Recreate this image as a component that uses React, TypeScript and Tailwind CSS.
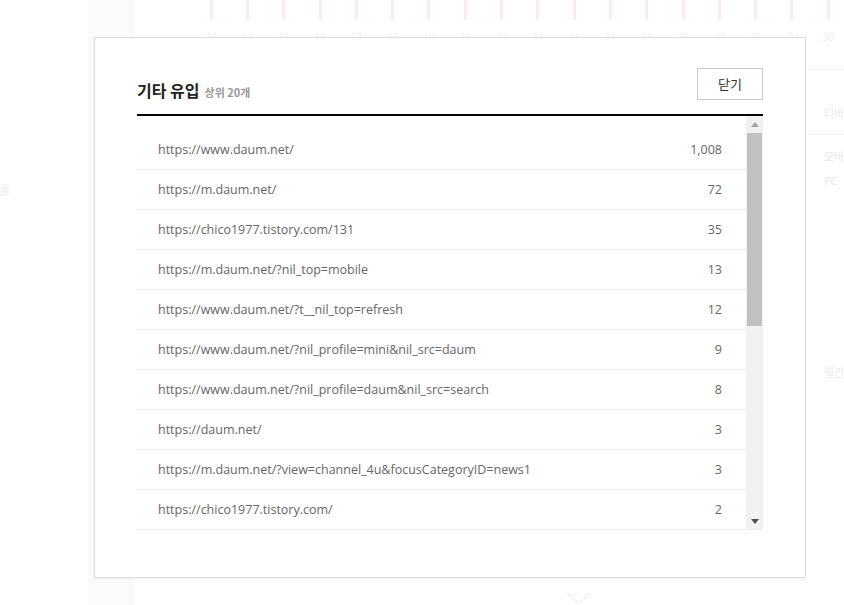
import React from "react";

const rows: [string, string][] = [
  ["https://www.daum.net/", "1,008"],
  ["https://m.daum.net/", "72"],
  ["https://chico1977.tistory.com/131", "35"],
  ["https://m.daum.net/?nil_top=mobile", "13"],
  ["https://www.daum.net/?t__nil_top=refresh", "12"],
  ["https://www.daum.net/?nil_profile=mini&nil_src=daum", "9"],
  ["https://www.daum.net/?nil_profile=daum&nil_src=search", "8"],
  ["https://daum.net/", "3"],
  ["https://m.daum.net/?view=channel_4u&focusCategoryID=news1", "3"],
  ["https://chico1977.tistory.com/", "2"],
];

const days = [13, 14, 15, 16, 17, 18, 19, 20, 21, 22, 23, 24, 25, 26, 27, 28, 29, 30];

function Backdrop() {
  return (
    <div className="flex h-[605px] w-[844px] bg-white">
      <div className="flex w-[88px] shrink-0 flex-col pt-[182px] text-[11px] text-[#eee]">
        <span>률</span>
      </div>
      <div className="w-[45px] shrink-0 border-r border-[#f6f6f6] bg-[#fbfbfb]" />
      <div className="flex min-w-0 flex-1 flex-col">
        <div className="flex pl-[60px]">
          {days.map((d) => (
            <div key={d} className="flex w-[36.3px] shrink-0 flex-col items-center">
              <div className="h-[20px] w-[3px] bg-[#fdecee]" />
              <span className="mt-[10px] text-[10px] text-[#eee]">{d}</span>
            </div>
          ))}
        </div>
        <div className="flex flex-1 items-end pb-[1px] pl-[433px]">
          <svg width="26" height="12" viewBox="0 0 26 12">
            <path d="M1 1 L13 11 L25 1" fill="none" stroke="#eee" strokeWidth="1.2" />
          </svg>
        </div>
      </div>
    </div>
  );
}

function Scrollbar() {
  return (
    <div className="flex w-[17px] flex-col bg-[#f1f1f1]">
      <div className="flex h-[17px] items-center justify-center">
        <svg width="8" height="5" viewBox="0 0 8 5">
          <path d="M0 5 L4 0 L8 5 Z" fill="#a3a3a3" />
        </svg>
      </div>
      <div className="mx-[1px] h-[193px] bg-[#c1c1c1]" />
      <div className="flex-1" />
      <div className="flex h-[17px] items-center justify-center">
        <svg width="8" height="5" viewBox="0 0 8 5">
          <path d="M0 0 L8 0 L4 5 Z" fill="#505050" />
        </svg>
      </div>
    </div>
  );
}

export default function App() {
  return (
    <div
      className="relative h-[605px] w-[844px] overflow-hidden"
      style={{ fontFamily: '"Open Sans", "Noto Sans CJK KR", sans-serif' }}
    >
      <Backdrop />

      {/* right side faded labels */}
      <div className="absolute left-[808px] top-0 flex h-full w-[36px] flex-col whitespace-nowrap text-[11px] text-[#e8e8e8]">
        <div className="h-[70px] border-b border-[#f5f5f5]" />
        <div className="flex h-[65px] items-end border-b border-[#f5f5f5] pb-[12px] pl-[16px]">디바</div>
        <div className="pl-[16px] pt-[10px] leading-[24px]">
          모바
          <br />
          PC
        </div>
        <div className="pl-[16px] pt-[172px]">일간</div>
      </div>

      {/* modal */}
      <div className="absolute left-[94px] top-[37px] h-[541px] w-[712px] border border-[#dcdcdc] bg-white px-[42px] pt-[30px] shadow-[0_1px_2px_rgba(0,0,0,0.06)]">
        <div className="flex h-[48px] items-start justify-between border-b-2 border-black">
          <h2
            className="mt-[10px] flex items-baseline gap-[5px] text-[16px] font-bold text-[#222]"
            style={{ fontFamily: '"Noto Sans CJK KR", sans-serif' }}
          >
            기타 유입
            <span className="text-[11px] font-bold text-[#999]">상위 20개</span>
          </h2>
          <button
            className="h-[32px] w-[66px] border border-[#c8c8c8] bg-white text-[13px] text-[#333]"
            style={{ fontFamily: '"Noto Sans CJK KR", sans-serif' }}
          >
            닫기
          </button>
        </div>
        <div className="flex h-[414px]">
          <ul className="flex-1 overflow-hidden pt-[14px]">
            {rows.map(([url, n]) => (
              <li
                key={url}
                className="flex h-[40px] items-center justify-between border-b border-[#ececec] pl-[21px] pr-[24px] pt-[2px] text-[12.5px] text-[#666]"
              >
                <span>{url}</span>
                <span>{n}</span>
              </li>
            ))}
          </ul>
          <Scrollbar />
        </div>
      </div>
    </div>
  );
}
